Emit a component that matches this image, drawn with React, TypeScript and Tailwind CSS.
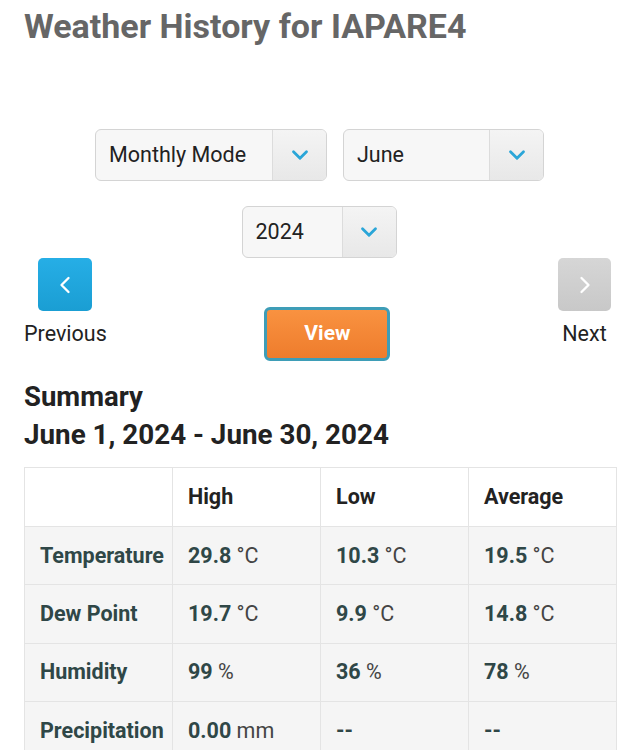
import { ChevronDown, ChevronLeft, ChevronRight } from "lucide-react";

type Row = { label: string; cells: [string, string][] };

const rows: Row[] = [
  { label: "Temperature", cells: [["29.8", "°C"], ["10.3", "°C"], ["19.5", "°C"]] },
  { label: "Dew Point", cells: [["19.7", "°C"], ["9.9", "°C"], ["14.8", "°C"]] },
  { label: "Humidity", cells: [["99", "%"], ["36", "%"], ["78", "%"]] },
  { label: "Precipitation", cells: [["0.00", "mm"], ["--", ""], ["--", ""]] },
];

function Select({ value, width }: { value: string; width: string }) {
  return (
    <div className={`flex h-[52px] ${width} rounded-md border border-[#d4d4d4] bg-[#f7f7f7] overflow-hidden`}>
      <div className="flex-1 flex items-center pl-[13px] text-[21.5px] text-[#222]">{value}</div>
      <div className="w-[54px] flex items-center justify-center border-l border-[#dcdcdc] bg-gradient-to-b from-[#f4f4f4] to-[#e8e8e8]">
        <ChevronDown size={26} strokeWidth={2.6} className="text-[#2ba6d8]" />
      </div>
    </div>
  );
}

export default function App() {
  return (
    <div className="w-[638px] h-[750px] overflow-hidden bg-white px-6 font-['Roboto',sans-serif]">
      <h1 className="pt-[5px] text-[34px] font-bold text-[#666] leading-[42px]">Weather History for IAPARE4</h1>

      <div className="mt-[82px] flex justify-center gap-4 pl-[1px]">
        <Select value="Monthly Mode" width="w-[232px]" />
        <Select value="June" width="w-[201px]" />
      </div>
      <div className="mt-[25px] flex justify-center">
        <Select value="2024" width="w-[155px]" />
      </div>

      {/* prev / view / next */}
      <div className="flex justify-between items-start">
        <div className="flex flex-col items-center">
          <div className="w-[54px] h-[53px] rounded-[5px] bg-gradient-to-b from-[#26aee6] to-[#1a9ed3] flex items-center justify-center">
            <ChevronLeft size={28} strokeWidth={2} className="text-white" />
          </div>
          <span className="mt-[11px] text-[21.5px] text-[#222] leading-6">Previous</span>
        </div>
        <div className="mt-[49px] mr-[10px] w-[126px] h-[54px] rounded-md border-[3px] border-[#3e9db7] bg-gradient-to-b from-[#f99240] to-[#ee7c2c] flex items-center justify-center text-white text-[21px] font-bold">
          View
        </div>
        <div className="flex flex-col items-center mr-[3px]">
          <div className="w-[53px] h-[53px] rounded-[5px] bg-gradient-to-b from-[#d6d6d6] to-[#c8c8c8] flex items-center justify-center">
            <ChevronRight size={28} strokeWidth={2} className="text-white" />
          </div>
          <span className="mt-[11px] text-[21.5px] text-[#222] leading-6">Next</span>
        </div>
      </div>

      <h2 className="mt-[19px] text-[27.5px] font-bold text-[#222] leading-[33px]">Summary</h2>
      <h3 className="mt-[5px] text-[27.8px] font-bold text-[#222] leading-[33px]">June 1, 2024 - June 30, 2024</h3>

      <table className="mt-[16px] w-[592px] border-collapse table-fixed text-[21.5px]">
        <thead>
          <tr className="h-[59px] bg-white">
            <th className="w-[148px] border border-[#e4e4e4]" />
            {["High", "Low", "Average"].map(h => (
              <th key={h} className="w-[148px] border border-[#e4e4e4] text-left pl-[15px] font-bold text-[#222]">{h}</th>
            ))}
          </tr>
        </thead>
        <tbody>
          {rows.map(r => (
            <tr key={r.label} className="h-[58.4px] bg-[#f5f5f5]">
              <td className="border border-[#e4e4e4] pl-[15px] font-bold text-[#2f4747] whitespace-nowrap">{r.label}</td>
              {r.cells.map(([v, u], i) => (
                <td key={i} className="border border-[#e4e4e4] pl-[15px] text-[#2f4747]">
                  <span className="font-bold">{v}</span>
                  {u && <span className="text-[#444]"> {u}</span>}
                </td>
              ))}
            </tr>
          ))}
        </tbody>
      </table>
    </div>
  );
}
